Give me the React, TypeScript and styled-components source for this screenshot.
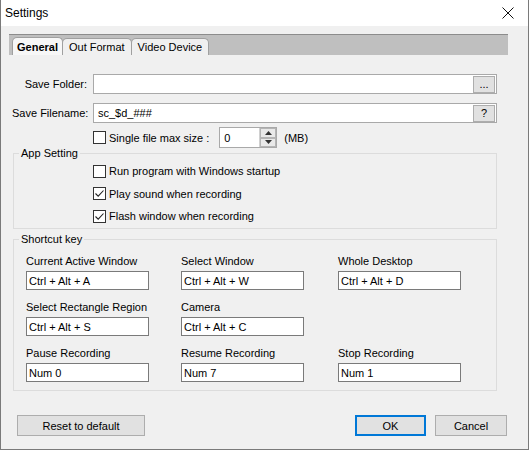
import React from "react";
import styled, { createGlobalStyle } from "styled-components";

const Global = createGlobalStyle`
  html, body { margin: 0; padding: 0; background: #f0f0f0; }
  * { box-sizing: border-box; }
`;

const Window = styled.div`
  width: 529px;
  height: 450px;
  background: #f0f0f0;
  border: 1px solid #7a7a7a;
  border-top: none;
  font-family: "Liberation Sans", Arial, sans-serif;
  font-size: 11px;
  line-height: 14px;
  color: #000;
  display: flex;
  flex-direction: column;
`;

const TitleBar = styled.div`
  height: 26px;
  background: #fff;
  display: flex;
  align-items: center;
  justify-content: space-between;
  padding: 0 14px 0 4px;
  font-size: 12px;
`;

const TabStrip = styled.div`
  margin: 8px 20px 0 8px;
  height: 21px;
  background: #bfbfbf;
  border-top: 1px solid #8c8c8c;
  display: flex;
  align-items: flex-end;
  padding-left: 3px;
`;

const Tab = styled.div<{ $active?: boolean }>`
  height: ${(p) => (p.$active ? 18 : 17)}px;
  padding: 0 ${(p) => (p.$active ? 4 : 6)}px;
  background: ${(p) => (p.$active ? "#f7f7f7" : "#f0f0f0")};
  border: 1px solid #a0a0a0;
  border-bottom: none;
  border-radius: 5px 5px 0 0;
  font-weight: ${(p) => (p.$active ? 700 : 400)};
  display: flex;
  align-items: center;
  margin-right: -1px;
  white-space: nowrap;
`;

const Content = styled.div`
  padding: 19px 31px 0 11px;
  display: flex;
  flex-direction: column;
`;

const FormRow = styled.div<{ $mt: number }>`
  display: flex;
  align-items: center;
  margin-top: ${(p) => p.$mt}px;
`;

const Label = styled.div`
  width: 75px;
  text-align: right;
  margin-right: 6px;
  white-space: nowrap;
`;

const TextBox = styled.div<{ $h: number }>`
  flex: 1;
  height: ${(p) => p.$h}px;
  background: #fff;
  border: 1px solid #a9a9a9;
  display: flex;
  align-items: center;
  justify-content: space-between;
  padding: 0 1px 0 4px;
`;

const SmallBtn = styled.div`
  width: 22px;
  height: 17px;
  background: #e1e1e1;
  border: 1px solid #adadad;
  display: flex;
  align-items: center;
  justify-content: center;
  font-size: 11px;
  line-height: 1;
`;

const CheckLine = styled.label`
  display: flex;
  align-items: center;
  gap: 3px;
  white-space: nowrap;
`;

const Box = styled.span`
  width: 13px;
  height: 13px;
  background: #fff;
  border: 1px solid #333;
  display: inline-flex;
  align-items: center;
  justify-content: center;
`;

const Spinner = styled.div`
  width: 58px;
  height: 21px;
  margin-left: 10px;
  background: #fff;
  border: 1px solid #a9a9a9;
  display: flex;
  align-items: center;
  justify-content: space-between;
  padding-left: 4px;
`;

const SpinBtns = styled.div`
  width: 17px;
  height: 19px;
  display: flex;
  flex-direction: column;
  border-left: 1px solid #d0d0d0;
`;

const SpinBtn = styled.div`
  flex: 1;
  background: #e9e9e9;
  border: 1px solid #b5b5b5;
  display: flex;
  align-items: center;
  justify-content: center;
`;

const Unit = styled.span`
  margin-left: 7px;
`;

const Group = styled.fieldset<{ $h: number; $mt: number }>`
  margin: ${(p) => p.$mt}px 0 0 1px;
  padding: 0;
  height: ${(p) => p.$h}px;
  border: 1px solid #dcdcdc;
  border-radius: 0;
`;

const Legend = styled.legend`
  padding: 0 2px;
  margin-left: 5px;
  line-height: 12px;
`;

const ChecksCol = styled.div`
  display: flex;
  flex-direction: column;
  gap: 8.5px;
  padding: 5px 0 0 79px;
`;

const Grid = styled.div`
  display: grid;
  grid-template-columns: 155px 157px 123px;
  row-gap: 10px;
  padding: 9px 0 0 12px;
`;

const Field = styled.div`
  display: flex;
  flex-direction: column;
  gap: 3px;
`;

const KeyBox = styled.div`
  width: 123px;
  height: 19px;
  background: #fff;
  border: 1px solid #7a7a7a;
  display: flex;
  align-items: center;
  padding-left: 2px;
`;

const Footer = styled.div`
  margin-top: auto;
  padding: 0 21px 13px 16px;
  display: flex;
  align-items: center;
`;

const Button = styled.div<{ $w: number; $primary?: boolean }>`
  width: ${(p) => p.$w}px;
  height: 21px;
  background: #e1e1e1;
  border: ${(p) => (p.$primary ? "2px solid #0078d7" : "1px solid #adadad")};
  display: flex;
  align-items: center;
  justify-content: center;
`;

const Spacer = styled.div`
  flex: 1;
`;

const Gap = styled.div<{ $w: number }>`
  width: ${(p) => p.$w}px;
`;

const Check = ({ on }: { on?: boolean }) => (
  <Box>
    {on && (
      <svg width="11" height="11" viewBox="0 0 11 11">
        <path d="M1.5 5.5 L4.2 8.2 L9.5 2.5" fill="none" stroke="#222" strokeWidth="1.1" />
      </svg>
    )}
  </Box>
);

const keys: [string, string][] = [
  ["Current Active Window", "Ctrl + Alt + A"],
  ["Select Window", "Ctrl + Alt + W"],
  ["Whole Desktop", "Ctrl + Alt + D"],
  ["Select Rectangle Region", "Ctrl + Alt + S"],
  ["Camera", "Ctrl + Alt + C"],
  ["", ""],
  ["Pause Recording", "Num 0"],
  ["Resume Recording", "Num 7"],
  ["Stop Recording", "Num 1"],
];

export default function App() {
  return (
    <Window>
      <Global />
      <TitleBar>
        <span>Settings</span>
        <svg width="12" height="12" viewBox="0 0 12 12">
          <path d="M0.5 0.5 L11.5 11.5 M11.5 0.5 L0.5 11.5" stroke="#111" strokeWidth="1" />
        </svg>
      </TitleBar>
      <TabStrip>
        <Tab $active>General</Tab>
        <Tab>Out Format</Tab>
        <Tab>Video Device</Tab>
      </TabStrip>
      <Content>
        <FormRow $mt={0}>
          <Label>Save Folder:</Label>
          <TextBox $h={20}>
            <span />
            <SmallBtn>...</SmallBtn>
          </TextBox>
        </FormRow>
        <FormRow $mt={9}>
          <Label>Save Filename:</Label>
          <TextBox $h={20}>
            <span>sc_$d_###</span>
            <SmallBtn>?</SmallBtn>
          </TextBox>
        </FormRow>
        <FormRow $mt={4}>
          <Label />
          <CheckLine>
            <Check />
            Single file max size :
          </CheckLine>
          <Spinner>
            <span>0</span>
            <SpinBtns>
              <SpinBtn>
                <svg width="7" height="4" viewBox="0 0 7 4"><path d="M0 4 L3.5 0 L7 4Z" fill="#333" /></svg>
              </SpinBtn>
              <SpinBtn>
                <svg width="7" height="4" viewBox="0 0 7 4"><path d="M0 0 L3.5 4 L7 0Z" fill="#333" /></svg>
              </SpinBtn>
            </SpinBtns>
          </Spinner>
          <Unit>(MB)</Unit>
        </FormRow>
        <Group $h={82} $mt={-1}>
          <Legend>App Setting</Legend>
          <ChecksCol>
            <CheckLine><Check />Run program with Windows startup</CheckLine>
            <CheckLine><Check on />Play sound when recording</CheckLine>
            <CheckLine><Check on />Flash window when recording</CheckLine>
          </ChecksCol>
        </Group>
        <Group $h={158} $mt={4}>
          <Legend>Shortcut key</Legend>
          <Grid>
            {keys.map(([l, v], i) => (
              <Field key={i}>
                {l ? <span>{l}</span> : null}
                {v ? <KeyBox>{v}</KeyBox> : null}
              </Field>
            ))}
          </Grid>
        </Group>
      </Content>
      <Footer>
        <Button $w={128}>Reset to default</Button>
        <Spacer />
        <Button $w={71} $primary>OK</Button>
        <Gap $w={9} />
        <Button $w={72}>Cancel</Button>
      </Footer>
    </Window>
  );
}
